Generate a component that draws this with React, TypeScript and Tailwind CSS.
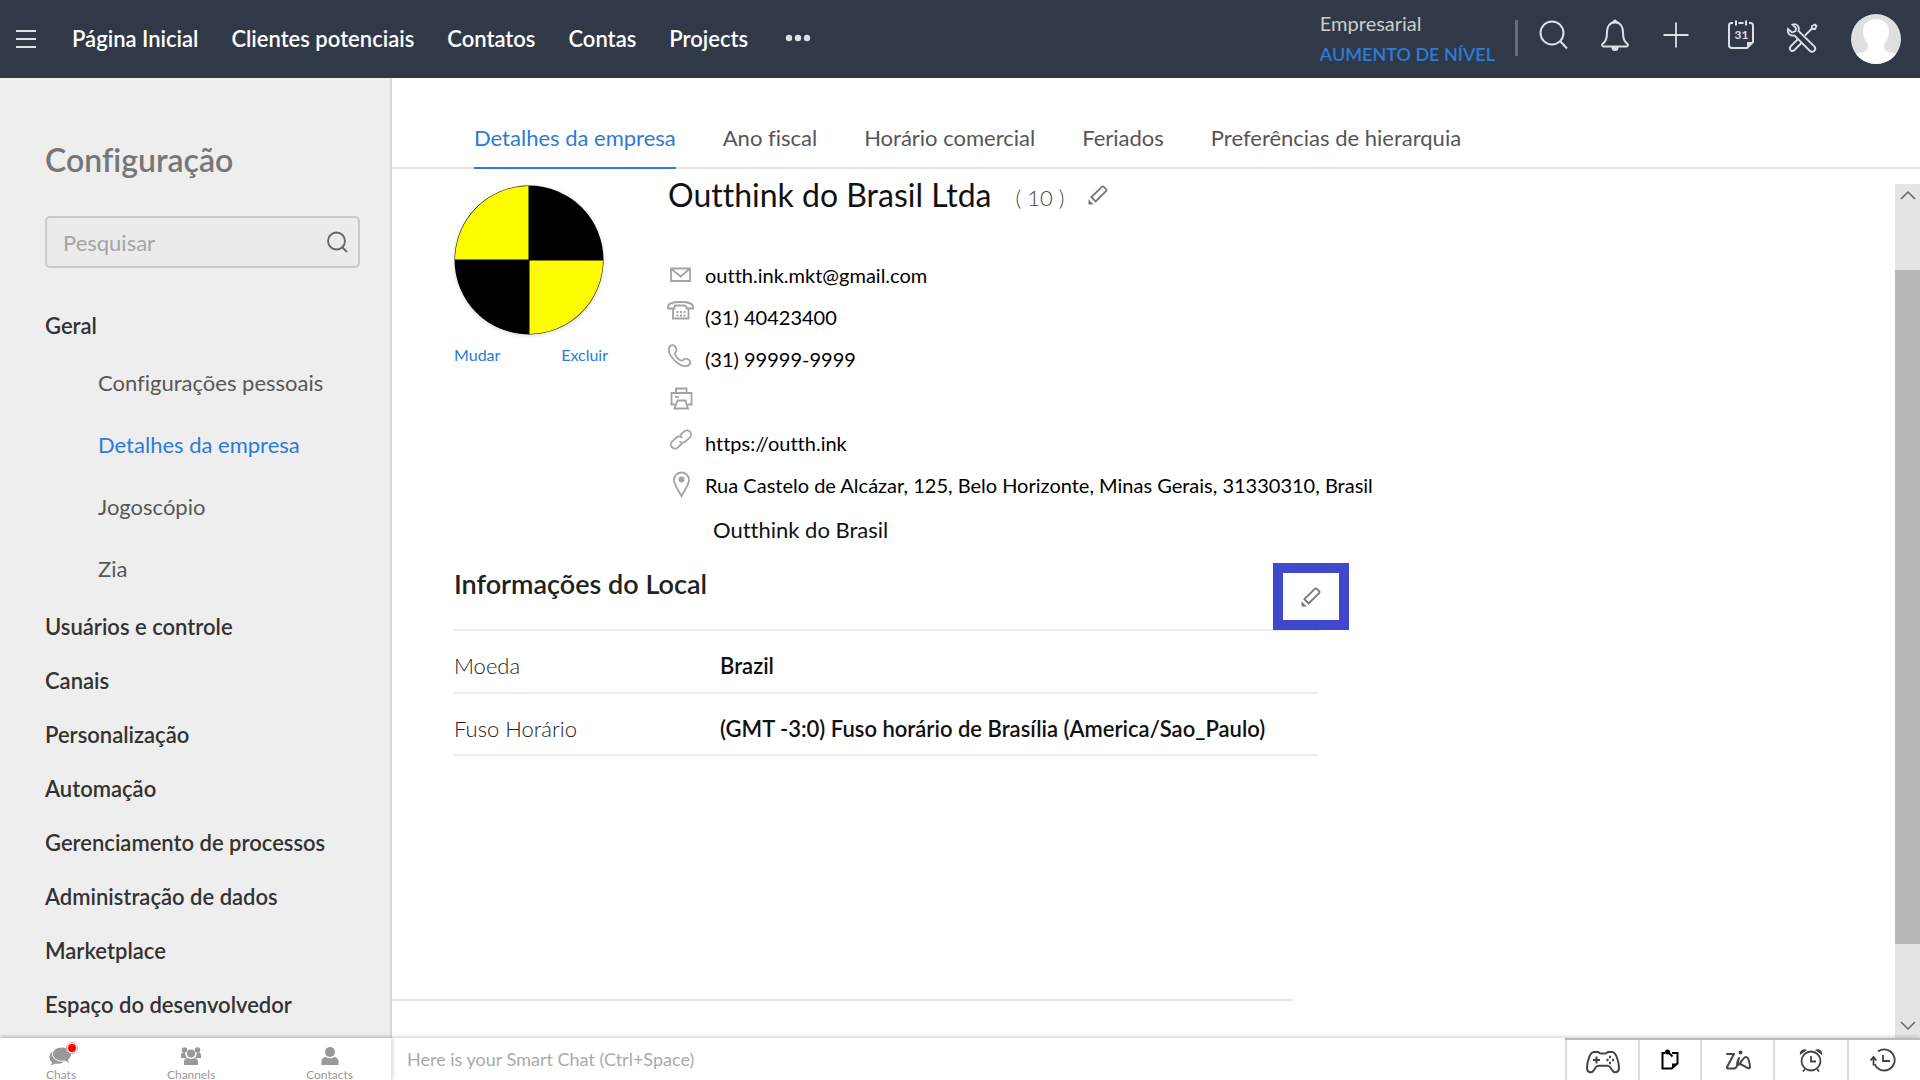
import type { ReactNode } from "react";

const navLinks = ["Página Inicial", "Clientes potenciais", "Contatos", "Contas", "Projects"];

const generalLinks = ["Configurações pessoais", "Detalhes da empresa", "Jogoscópio", "Zia"];

const sections = [
  "Usuários e controle",
  "Canais",
  "Personalização",
  "Automação",
  "Gerenciamento de processos",
  "Administração de dados",
  "Marketplace",
  "Espaço do desenvolvedor",
];

const tabs = ["Detalhes da empresa", "Ano fiscal", "Horário comercial", "Feriados", "Preferências de hierarquia"];

type IconProps = { className?: string; size?: number; width?: number; children: ReactNode };

function Icon({ className = "", size = 32, width = 2, children }: IconProps) {
  return (
    <svg
      className={`shrink-0 ${className}`}
      width={size}
      height={size}
      viewBox={`0 0 ${size} ${size}`}
      fill="none"
      stroke="currentColor"
      strokeWidth={width}
      aria-hidden="true"
    >
      {children}
    </svg>
  );
}

function PencilIcon() {
  return (
    <Icon size={20} width={1.8} className="text-[#777]">
      <path d="M3.4 12.2 13.8 1.8a1.4 1.4 0 0 1 2 0l2.3 2.3a1.4 1.4 0 0 1 0 2L7.7 16.5z" />
      <path d="M.5 14.3v5.2h5.2z" fill="currentColor" stroke="none" />
    </Icon>
  );
}

const contacts = [
  {
    label: "outth.ink.mkt@gmail.com",
    icon: (
      <>
        <path d="M6 11.500h19V24H6z" />
        <path d="m6.500 12 9 7.500 9-7.500" />
      </>
    ),
  },
  {
    label: "(31) 40423400",
    icon: (
      <>
        <path d="M3 8c0-3 4-5 12.500-5S28 5 28 8v1.500h-6.500V8c0-1-1-1.500-2-1.500h-8c-1 0-2 .5-2 1.500v1.500H3z" />
        <path d="M8 9.500V19.500h15.500V9.500" />
        <path d="M11.500 13h9M11.500 16.500h9" strokeDasharray="2 1.500" />
      </>
    ),
  },
  {
    label: "(31) 99999-9999",
    icon: (
      <path d="M4 7c.4-2 2.600-3.400 4.600-2.700 1.600.6 3 3 3 4.700 0 1.900-2 2-1.600 4 .6 2.600 3.800 6 6.500 6.600 1.900.4 2.200-1.700 4-1.900 1.700-.1 4.500 1.300 4.800 3 .4 2-1 3.800-3.200 4.200C14 26.300 2.600 14.500 4 7z" />
    ),
  },
  {
    label: "",
    icon: (
      <>
        <path d="M11 10V5.500h10.500V10" />
        <path d="M10.500 21.500H6.500V10h20v11.500h-4" />
        <path d="M12.500 17.500h8l2.500 8H9.500z" />
        <path d="M10 14h4" />
      </>
    ),
  },
  {
    label: "https://outth.ink",
    icon: (
      <>
        <path d="m15 10.500 4-3.800c1.900-1.800 4.500-1.700 6.100.1 1.400 1.600 1.300 4.200-.4 5.800l-4.200 3.900c-1.800 1.700-4.600 1.600-6-.2" />
        <path d="m17 18.500-4 3.800c-1.900 1.800-4.500 1.700-6.100-.1-1.400-1.600-1.300-4.200.4-5.800l4.200-3.900c1.800-1.700 4.600-1.600 6 .2" />
      </>
    ),
  },
  {
    label: "Rua Castelo de Alcázar, 125, Belo Horizonte, Minas Gerais, 31330310, Brasil",
    icon: (
      <>
        <path d="M16.500 29C13 22.500 9 17.500 9 13a7.500 7.500 0 0 1 15 0c0 4.500-4 9.500-7.500 16z" />
        <circle cx="16.500" cy="12.500" r="3" fill="currentColor" stroke="none" />
      </>
    ),
  },
];

function Header() {
  return (
    <header className="flex h-[78px] items-center bg-[#313949] pr-[19px] pl-4 text-white">
      <button type="button" aria-label="Menu" className="mr-9">
        <Icon size={20} width={1.8} className="text-[#dcdfe4]">
          <path d="M0 2h20M0 10h20M0 18h20" />
        </Icon>
      </button>
      <nav className="flex flex-1 items-center gap-[33px] pb-[2px] text-[22px] font-semibold">
        {navLinks.map((link) => (
          <a key={link} href="#" className="whitespace-nowrap">{link}</a>
        ))}
        <button type="button" aria-label="Mais" className="ml-1">
          <svg width="26" height="8" viewBox="0 0 26 8" fill="#dcdfe4">
            <circle cx="4" cy="4" r="3.200" />
            <circle cx="13" cy="4" r="3.200" />
            <circle cx="22" cy="4" r="3.200" />
          </svg>
        </button>
      </nav>
      <div className="pr-5 text-[18px] leading-[31px]">
        <div className="text-[20px] text-[#c9ccd1]">Empresarial</div>
        <a href="#" className="block font-semibold text-[#2c7bd6]">AUMENTO DE NÍVEL</a>
      </div>
      <div className="mb-[2px] h-9 w-[3px] bg-[#656b78]" />
      <div className="ml-5 flex items-center gap-[29px] pb-2 text-[#dcdfe4]">
        <button type="button" aria-label="Pesquisar">
          <Icon size={32}>
            <circle cx="14" cy="14" r="11.500" />
            <path d="m22 22 7 7.500" />
          </Icon>
        </button>
        <button type="button" aria-label="Notificações">
          <Icon size={32}>
            <path d="M16 3.500c-5.500 0-8 4.500-8 9.500 0 7.500-1.500 9.500-4.500 12-.8.800-.5 2.500 1 2.500h23c1.500 0 1.800-1.700 1-2.500-3-2.500-4.500-4.500-4.500-12 0-5-2.500-9.500-8-9.500z" />
            <path d="M13.500 28.500a2.500 2.500 0 0 0 5 0zM14 3l2-1.500L18 3z" fill="currentColor" />
          </Icon>
        </button>
        <button type="button" aria-label="Adicionar">
          <Icon size={32} width={1.8}>
            <path d="M16 3.500v25M3.500 16h25" />
          </Icon>
        </button>
        <button type="button" aria-label="Calendário" className="ml-1">
          <Icon size={32}>
            <path d="M8 4H6.500C4.500 4 4 5 4 7v19c0 2 1 3 3 3h15l6-6V7c0-2-.5-3-2.500-3H24M13.500 4h5" />
            <path d="M11 1.500v5M21 1.500v5" />
            <path d="M22 29v-6h6z" fill="currentColor" stroke="none" />
            <text x="16.500" y="19.500" textAnchor="middle" fontSize="12" fontWeight="700" fill="currentColor" stroke="none">31</text>
          </Icon>
        </button>
        <button type="button" aria-label="Configuração" className="pt-[5px]">
          <Icon size={32} width={1.8}>
            <path d="M6.500 2.500c4-1.500 7.500 2 6 6.500L28.500 24.500c2.500 3.500-2 7-5 4L8.500 13.500c-4 1-7.500-2-6.500-6.500l4 3.500 3.500-1.500.5-3z" />
            <path d="m19 13.500 6.500-6.500M25.500 7l.5-3 3-1.500 1.500 1.500L29 7zM11.500 17.500 5 24c-3 3 .5 6.500 3.500 4l7-7" />
          </Icon>
        </button>
      </div>
      <button type="button" aria-label="Perfil" className="ml-[33px] size-[50px] overflow-hidden rounded-full bg-[#dfdfdf]">
        <svg viewBox="0 0 50 50" fill="#fff" aria-hidden="true">
          <path d="M25 5c8 0 13.500 5 13 13-.2 5-2 8-4 11-1 2-1.500 5 0 7 3 3 8 2 12 4v12H4V40c4-2 9-1 12-4 1.500-2 1-5 0-7-2-3-3.800-6-4-11C11.500 10 17 5 25 5z" />
        </svg>
      </button>
    </header>
  );
}

function Sidebar() {
  return (
    <aside className="w-[392px] shrink-0 border-r-2 border-[#d9d9d9] bg-[#eee] px-[45px] pt-[62px]">
      <h1 className="text-[32px] leading-10 font-semibold text-[#777]">Configuração</h1>
      <label className="mt-9 -mr-[15px] flex h-[52px] items-center rounded-[5px] border-2 border-[#c9c9c9] bg-[#ebebeb] px-4">
        <input
          type="text"
          aria-label="Pesquisar"
          placeholder="Pesquisar"
          className="min-w-0 flex-1 bg-transparent text-[22px] outline-none placeholder:text-[#a5a5a5]"
        />
        <Icon size={24} width={1.8} className="-mr-2 text-[#666]">
          <circle cx="10.500" cy="11" r="8.500" />
          <path d="m16.500 17.500 4.500 4.500" />
        </Icon>
      </label>
      <nav className="mt-[31px] text-[22px] font-semibold text-[#333]">
        <a href="#" className="flex h-[52px] items-center">Geral</a>
        <ul className="pl-[53px] font-normal text-[#585858]">
          {generalLinks.map((link) => (
            <li key={link}>
              <a
                href="#"
                className={`flex h-[62px] items-center whitespace-nowrap ${link === "Detalhes da empresa" ? "text-[#2c7bd6]" : ""}`}
              >
                {link}
              </a>
            </li>
          ))}
        </ul>
        <ul>
          {sections.map((section) => (
            <li key={section}>
              <a href="#" className="flex h-[54px] items-center whitespace-nowrap">{section}</a>
            </li>
          ))}
        </ul>
      </nav>
    </aside>
  );
}

function CompanyLogo() {
  return (
    <svg width="150" height="150" viewBox="0 0 150 150" role="img" aria-label="Logo" className="drop-shadow-sm">
      <circle cx="75" cy="75" r="74.500" fill="#000" />
      <path d="M74.500 1v73.500H1A74 74 0 0 1 74.500 1zM75.500 149V75.500H149A74 74 0 0 1 75.500 149z" fill="#fdfd00" />
    </svg>
  );
}

function Company() {
  return (
    <section className="flex pl-[62px]">
      <div className="w-[214px] shrink-0 pt-4">
        <CompanyLogo />
        <div className="mt-1 flex w-[154px] justify-between text-[16px] leading-8 text-[#2c7bd6]">
          <a href="#">Mudar</a>
          <a href="#">Excluir</a>
        </div>
      </div>
      <div>
        <div className="flex h-[52px] items-center">
          <h2 className="text-[32px] text-[#111]">Outthink do Brasil Ltda</h2>
          <span className="mt-1 ml-6 text-[22px] font-light text-[#444]">( 10 )</span>
          <button type="button" aria-label="Editar empresa" className="ml-6">
            <PencilIcon />
          </button>
        </div>
        <ul className="mt-[33px] text-[20px] text-black">
          {contacts.map((contact) => (
            <li key={contact.label} className="flex h-[42px] items-center">
              <Icon size={32} width={1.8} className="-mt-1 mr-2 -ml-[3px] text-[#a3a3a3]">
                {contact.icon}
              </Icon>
              {contact.label}
            </li>
          ))}
        </ul>
        <p className="pt-2 pl-[45px] text-[22px] leading-8 text-[#111]">Outthink do Brasil</p>
      </div>
    </section>
  );
}

function Locale() {
  return (
    <section className="ml-[62px] w-[864px]">
      <div className="relative border-b-2 border-[#ededed] pt-5 pb-[27px]">
        <h2 className="text-[27px] leading-9 font-semibold text-[#222]">Informações do Local</h2>
        <button
          type="button"
          aria-label="Editar local"
          className="absolute -right-[31px] -bottom-px flex h-[67px] w-[76px] items-center justify-center border-10 border-[#4048cc] bg-white"
        >
          <PencilIcon />
        </button>
      </div>
      <table className="w-full text-left text-[22px] text-[#111]">
        <tbody>
          <tr className="h-[62px] border-b-2 border-[#ededed]">
            <th className="w-[266px] pt-2 font-light text-[#222]">Moeda</th>
            <td className="pt-2 font-semibold">Brazil</td>
          </tr>
          <tr className="h-[62px] border-b-2 border-[#ededed]">
            <th className="pt-2 font-light text-[#222]">Fuso Horário</th>
            <td className="pt-2 font-semibold">(GMT -3:0) Fuso horário de Brasília (America/Sao_Paulo)</td>
          </tr>
        </tbody>
      </table>
    </section>
  );
}

function ScrollBar() {
  return (
    <div className="mt-[15px] flex w-[25px] shrink-0 flex-col items-center bg-[#e5e5e5] py-1 text-[#666]" aria-hidden="true">
      <Icon size={16} width={1.5}>
        <path d="m1 11 7-7 7 7" />
      </Icon>
      <div className="mt-[66px] mb-[74px] w-full flex-1 bg-[#b8b8b8]" />
      <Icon size={16} width={1.5}>
        <path d="m1 4 7 7 7-7" />
      </Icon>
    </div>
  );
}

function Main() {
  return (
    <main className="flex min-w-0 flex-1 flex-col bg-white">
      <nav className="flex items-end gap-[47px] border-b-2 border-[#e3e3e3] pt-[43px] pl-[82px] text-[22px] text-[#555]">
        {tabs.map((tab, i) => (
          <a
            key={tab}
            href="#"
            className={`-mb-[2px] flex h-12 items-start border-b-2 whitespace-nowrap ${i === 0 ? "border-[#2c7bd6] text-[#2c7bd6]" : "border-transparent"}`}
          >
            {tab}
          </a>
        ))}
      </nav>
      <div className="flex flex-1">
        <div className="flex flex-1 flex-col">
          <Company />
          <Locale />
          <div className="mt-auto mb-[37px] w-[901px] border-b-2 border-[#e3e3e3]" />
        </div>
        <ScrollBar />
      </div>
    </main>
  );
}

function Footer() {
  return (
    <footer className="relative flex h-[42px] bg-white shadow-[0_-1px_4px_rgba(0,0,0,0.2)]">
      <div className="flex w-[391px] shrink-0 justify-between pt-2 pr-[38px] pl-[46px] text-[12px] leading-[18px] text-[#999] shadow-[2px_0_4px_rgba(0,0,0,0.15)]">
        <button type="button" className="relative flex flex-col items-center">
          <svg width="24" height="20" viewBox="0 0 24 20" fill="#999" className="shrink-0">
            <path d="M9 4C4 4 .5 7 .5 11c0 2 1 4 2.500 5.200L2 19.500l4.500-2c5 1 9-1 10-4.500z" />
            <path d="M13 1c5.500 0 9.500 3 9.500 7 0 2.500-1.500 4.500-3 5.500l1 4-5-2.500C8.500 16 3.500 12.500 3.500 8 3.500 4 7.500 1 13 1z" stroke="#fff" strokeWidth="1" />
          </svg>
          <span className="absolute -top-1 -right-[2px] size-3 rounded-full border border-[#f99] bg-white p-px">
            <span className="block size-2 rounded-full bg-[#f00]" />
          </span>
          Chats
        </button>
        <button type="button" className="flex flex-col items-center">
          <svg width="24" height="20" viewBox="0 0 24 20" fill="#999" className="shrink-0">
            <circle cx="5.500" cy="4" r="2.800" />
            <circle cx="18.500" cy="4" r="2.800" />
            <path d="M2 12V9c0-2 1.500-3 4-2 .5 2 1 3.500 2 5zM22 12V9c0-2-1.500-3-4-2-.5 2-1 3.500-2 5z" />
            <circle cx="12" cy="7.500" r="4" />
            <path d="M5 19v-3c0-3 2-4 4-4 2 1.500 4 1.500 6 0 2 0 4 1 4 4v3z" />
          </svg>
          Channels
        </button>
        <button type="button" className="flex flex-col items-center">
          <svg width="24" height="20" viewBox="0 0 24 20" fill="#999" className="shrink-0">
            <circle cx="12" cy="6" r="5" />
            <path d="M3.500 19v-3.500c0-3 2-4.500 4.500-4.500 2.500 1.700 5.500 1.700 8 0 2.500 0 4.500 1.500 4.500 4.500V19z" />
          </svg>
          Contacts
        </button>
      </div>
      <input
        type="text"
        aria-label="Smart Chat"
        placeholder="Here is your Smart Chat (Ctrl+Space)"
        className="min-w-0 flex-1 px-4 text-[18px] outline-none placeholder:text-[#aaa]"
      />
      <div className="flex border-t-2 border-[#bbb] text-[#444]">
        <button type="button" aria-label="Jogoscópio" className="flex w-[73px] items-center justify-center border-l-2 border-[#ddd] pt-1">
          <svg width="34" height="24" viewBox="0 0 34 24" fill="none" stroke="currentColor" strokeWidth="2">
            <path d="M8 2h4c1 0 1.500 1.500 3 1.500h4C20.500 3.500 21 2 22 2h4c4 0 7 10 7 16 0 5-5 5.500-7 2l-2-3c-.8-1-1.500-1.200-3-1.200h-8c-1.500 0-2.200.2-3 1.200l-2 3c-2 3.500-7 3-7-2C1 12 4 2 8 2z" />
            <path d="M7 10h7M10.500 6.500v7" />
            <path d="M23 7h2M20.500 10h2M26 10h2M23 13h2" strokeWidth="2.500" />
          </svg>
        </button>
        <button type="button" aria-label="Notas" className="flex w-[62px] items-center justify-center border-l-2 border-[#ddd]">
          <svg width="18" height="22" viewBox="0 0 18 22" fill="none" stroke="#000" strokeWidth="2">
            <path d="M4 4H1.500v15.500h9l6-5V4H11" />
            <path d="M11 20.500v-6h6z" fill="#000" stroke="none" />
            <circle cx="6.500" cy="3" r="2.500" fill="#000" stroke="none" />
            <path d="m7 3 4.500 4.500" />
          </svg>
        </button>
        <button type="button" aria-label="Zia" className="flex w-[73px] items-center justify-center border-l-2 border-[#ddd]">
          <svg width="26" height="20" viewBox="0 0 26 20" fill="none" stroke="currentColor" strokeWidth="2" strokeLinecap="round" strokeLinejoin="round">
            <path d="M2 4h7L2 17c-.5 1 0 1.500 1 1.500h6c1.500 0 2.500-1 3-3L14 8c-2 4-2.500 7-1 7 2 0 5-8 8-8 2 0 3.500 5 4 10 0 1-.8 1.500-2 1-3-1-6-4-9-4" />
            <circle cx="15.500" cy="2.500" r="1" fill="currentColor" />
          </svg>
        </button>
        <button type="button" aria-label="Lembretes" className="flex w-[74px] items-center justify-center border-l-2 border-[#ddd]">
          <svg width="24" height="24" viewBox="0 0 24 24" fill="none" stroke="currentColor" strokeWidth="1.800">
            <circle cx="12" cy="13" r="9.500" />
            <path d="M12 8v5.500h5M6 21l-2 2.500M18 21l2 2.500" />
            <path d="M1 7c-1-4 3-7 7-5zM23 7c1-4-3-7-7-5z" fill="currentColor" stroke="none" />
          </svg>
        </button>
        <button type="button" aria-label="Histórico" className="flex w-[73px] items-center justify-center border-l-2 border-[#ddd] pr-1">
          <svg width="26" height="24" viewBox="0 0 26 24" fill="none" stroke="currentColor" strokeWidth="1.800">
            <path d="M8 3.500A10.500 10.500 0 1 1 4.500 16M3.500 17.500V10M.500 12.500l3-3.500 3 3.500" />
            <path d="M13 7v6h7" />
          </svg>
        </button>
      </div>
    </footer>
  );
}

export default function App() {
  return (
    <div className="flex min-h-screen flex-col font-[Lato,sans-serif] [font-variant-ligatures:none]">
      <Header />
      <div className="flex flex-1">
        <Sidebar />
        <Main />
      </div>
      <Footer />
    </div>
  );
}
